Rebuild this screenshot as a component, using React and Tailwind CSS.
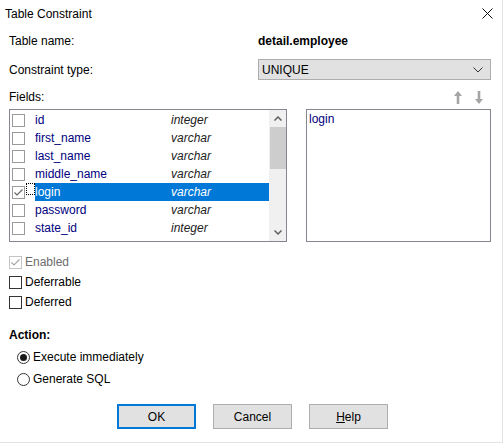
import React from "react";

const fields = [
  ["id", "integer", false],
  ["first_name", "varchar", false],
  ["last_name", "varchar", false],
  ["middle_name", "varchar", false],
  ["login", "varchar", true],
  ["password", "varchar", false],
  ["state_id", "integer", false],
];

function Check({ checked, color = "#333333", checkColor = "#333333" }) {
  return (
    <div className="w-[13px] h-[13px] border bg-white flex items-center justify-center shrink-0" style={{ borderColor: color }}>
      {checked && (
        <svg width="11" height="11" viewBox="0 0 11 11">
          <path d="M1.5 5.5 L4 8 L9.5 2.5" fill="none" stroke={checkColor} strokeWidth="1.2" />
        </svg>
      )}
    </div>
  );
}

function Radio({ checked }) {
  return (
    <div className="w-[13px] h-[13px] rounded-full border border-[#333333] bg-white flex items-center justify-center shrink-0">
      {checked && <div className="w-[7px] h-[7px] rounded-full bg-[#1a1a1a]" />}
    </div>
  );
}

export default function App() {
  return (
    <div className="w-[503px] h-[443px] bg-white border-r border-b border-[#e3e3e3] text-[12px] text-black font-['Liberation_Sans',Arial,sans-serif] leading-none flex flex-col">
      {/* title bar */}
      <div className="h-[27px] flex items-center justify-between pl-[5px] pr-[9px]">
        <span className="text-[12px]">Table Constraint</span>
        <svg width="11" height="11" viewBox="0 0 11 11">
          <path d="M0.5 0.5 L10.5 10.5 M10.5 0.5 L0.5 10.5" stroke="#111" strokeWidth="1" />
        </svg>
      </div>

      <div className="pl-[9px] flex flex-col">
        <div className="h-[28px] flex items-center">
          <span className="w-[249px]">Table name:</span>
          <span className="font-bold">detail.employee</span>
        </div>
        <div className="mt-[4px] h-[21px] flex items-center">
          <span className="w-[249px]">Constraint type:</span>
          <div className="w-[233px] h-[21px] bg-[#e1e1e1] border border-[#adadad] flex items-center justify-between pl-[3px] pr-[7px]">
            <span>UNIQUE</span>
            <svg width="10" height="6" viewBox="0 0 10 6">
              <path d="M0.5 0.5 L5 5 L9.5 0.5" fill="none" stroke="#333" strokeWidth="1" />
            </svg>
          </div>
        </div>
        <div className="h-[29px] pt-[5px] flex items-center">
          <span className="w-[445px]">Fields:</span>
          <svg width="8" height="13" viewBox="0 0 8 13">
            <path d="M4 0 L8 5 L5.3 5 L5.3 13 L2.7 13 L2.7 5 L0 5 Z" fill="#a5a5a5" />
          </svg>
          <svg width="8" height="13" viewBox="0 0 8 13" className="ml-[13px]">
            <path d="M4 13 L8 8 L5.3 8 L5.3 0 L2.7 0 L2.7 8 L0 8 Z" fill="#a5a5a5" />
          </svg>
        </div>

        {/* lists */}
        <div className="h-[133px] flex gap-[19px]">
          <div className="w-[278px] h-[133px] border border-[#828790] flex">
            <div className="flex-1 pt-[1px] flex flex-col">
              {fields.map(([name, type, sel]) => (
                <div key={name} className="h-[18px] flex items-center">
                  <div className="w-[25px] pl-[2px] flex items-center">
                    <Check checked={sel} color="#9a9a9a" checkColor="#666" />
                  </div>
                  <div
                    className={
                      "flex-1 h-[18px] flex items-center relative " +
                      (sel ? "bg-[#0078d7] text-white" : "text-[#000080]")
                    }
                  >
                    {sel && (
                      <div className="absolute left-[-9px] top-0 w-[9px] h-[12px] border border-dotted border-black bg-white" />
                    )}
                    <span className="w-[136px]">{name}</span>
                    <span className={"italic " + (sel ? "text-white" : "text-[#222]")}>{type}</span>
                  </div>
                </div>
              ))}
            </div>
            <div className="w-[17px] bg-[#f0f0f0] flex flex-col items-center">
              <div className="h-[17px] flex items-center justify-center">
                <svg width="8" height="5" viewBox="0 0 8 5">
                  <path d="M0.5 4.5 L4 1 L7.5 4.5" fill="none" stroke="#606060" strokeWidth="1.5" />
                </svg>
              </div>
              <div className="w-[16px] h-[42px] bg-[#cdcdcd]" />
              <div className="flex-1" />
              <div className="h-[17px] flex items-center justify-center">
                <svg width="8" height="5" viewBox="0 0 8 5">
                  <path d="M0.5 0.5 L4 4 L7.5 0.5" fill="none" stroke="#606060" strokeWidth="1.5" />
                </svg>
              </div>
            </div>
          </div>
          <div className="w-[185px] h-[133px] border border-[#828790] pl-[2px] pt-[2px]">
            <div className="h-[14px] flex items-center text-[#000080]">login</div>
          </div>
        </div>

        {/* checkboxes */}
        <div className="mt-[10px] h-[20px] flex items-center gap-[3px] text-[#6d6d6d]">
          <Check checked color="#c4c4c4" checkColor="#a8a8a8" />
          <span>Enabled</span>
        </div>
        <div className="h-[20px] flex items-center gap-[3px]">
          <Check checked={false} />
          <span>Deferrable</span>
        </div>
        <div className="h-[20px] flex items-center gap-[3px]">
          <Check checked={false} />
          <span>Deferred</span>
        </div>

        <div className="mt-[13px] h-[20px] flex items-center font-bold">Action:</div>
        <div className="mt-[2px] h-[20px] flex items-center gap-[3px] pl-[8px]">
          <Radio checked />
          <span>Execute immediately</span>
        </div>
        <div className="mt-[2px] h-[20px] flex items-center gap-[3px] pl-[8px]">
          <Radio checked={false} />
          <span>Generate SQL</span>
        </div>

        <div className="mt-[15px] flex gap-[17px] pl-[108px]">
          <div className="w-[79px] h-[25px] bg-[#e1e1e1] border-2 border-[#0078d7] flex items-center justify-center">OK</div>
          <div className="w-[79px] h-[25px] bg-[#e1e1e1] border border-[#adadad] flex items-center justify-center">Cancel</div>
          <div className="w-[79px] h-[25px] bg-[#e1e1e1] border border-[#adadad] flex items-center justify-center">
            <span><span className="underline">H</span>elp</span>
          </div>
        </div>
      </div>
    </div>
  );
}
